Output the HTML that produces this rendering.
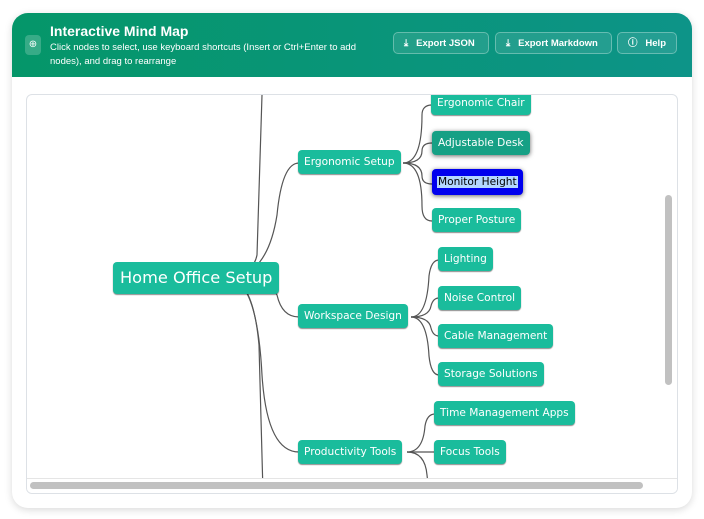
<!DOCTYPE html><html><head><style>
body{margin:0;width:704px;height:519px;background:#fff;font-family:"Liberation Sans",sans-serif;position:relative;overflow:hidden}
.card{position:absolute;left:12px;top:13px;width:680px;height:495px;border-radius:16px;background:#fff;box-shadow:0 2px 8px rgba(0,0,0,.15);overflow:hidden}
.hdr{position:absolute;left:0;top:0;width:680px;height:64px;background:linear-gradient(90deg,#059669,#0d9488)}
.ic{position:absolute;left:13px;top:22px;width:16px;height:20px;border-radius:4px;background:rgba(255,255,255,.2);color:#fff;font-size:10px;text-align:center;line-height:20px}
.t{position:absolute;left:38px;top:10px;color:#fff;font-weight:bold;font-size:14px}
.s{position:absolute;left:38px;top:28px;color:#fff;font-size:9.5px;line-height:14px;width:330px}
.b{position:absolute;top:19px;height:22px;border:1px solid rgba(255,255,255,.3);background:rgba(255,255,255,.1);border-radius:5px;color:#fff;font-size:9.5px;font-weight:bold;line-height:22px;box-sizing:border-box;padding-left:10px}
.map{position:absolute;left:14px;top:81px;width:650px;height:398px;border:1px solid #dde1e6;border-radius:6px;overflow:hidden;background:#fff}
.n{position:absolute;background:#1abc9c;color:#fff;border-radius:4px;font-family:"DejaVu Sans",sans-serif;font-size:10.6px;line-height:24px;padding:0 6px;box-shadow:0 1px 1px rgba(0,0,0,.45);white-space:nowrap}
</style></head><body>
<div class="card">
<div class="hdr">
<div class="ic">⊕</div>
<div class="t">Interactive Mind Map</div>
<div class="s">Click nodes to select, use keyboard shortcuts (Insert or Ctrl+Enter to add nodes), and drag to rearrange</div>
<div class="b" style="left:381px;width:96px">⤓&nbsp;&nbsp; Export JSON</div>
<div class="b" style="left:483px;width:117px">⤓&nbsp;&nbsp; Export Markdown</div>
<div class="b" style="left:605px;width:60px">ⓘ&nbsp;&nbsp; Help</div>
</div>
<div class="map">
<svg width="650" height="398" style="position:absolute;left:0;top:0" fill="none" stroke="#555" stroke-width="1.2">
<path d="M235 0 L230 160 Q226 180 200 183"/>
<path d="M200 183 Q226 183 232 250 L236 398"/>
<path d="M200 183 Q240 183 250 120 Q255 68 272 68"/>
<path d="M200 183 Q240 183 250 200 Q255 222 272 222"/>
<path d="M200 183 Q230 183 235 280 Q240 357 272 357"/>
<path d="M376 68 Q395 68 395 20 Q395 10 405 10"/>
<path d="M376 68 Q395 68 395 56 Q395 48 405 48"/>
<path d="M376 68 Q395 68 395 81 Q395 89 405 89"/>
<path d="M376 68 Q395 68 395 111 Q395 126 405 126"/>
<path d="M384 222 Q400 222 402 181 Q404 165 412 165"/>
<path d="M384 222 Q402 222 404 211 Q406 203 412 203"/>
<path d="M384 222 Q402 222 404 233 Q406 241 412 241"/>
<path d="M384 222 Q400 222 402 261 Q404 280 412 280"/>
<path d="M380 357 Q396 357 398 331 Q400 319 408 319"/>
<path d="M380 357 L408 357"/>
<path d="M380 357 Q398 357 400 380 L402 398"/>
</svg>
<div class="n" style="left:86px;top:167px;font-size:16.2px;line-height:32px;padding:0 7px">Home Office Setup</div>
<div class="n" style="left:271px;top:55px">Ergonomic Setup</div>
<div class="n" style="left:404px;top:-4px">Ergonomic Chair</div>
<div class="n" style="left:405px;top:36px;background:#16a085;box-shadow:0 1px 5px rgba(0,0,0,.6)">Adjustable Desk</div>
<div class="n" style="left:405px;top:74px;background:#0000ee;padding:0 2px;line-height:20px;border:3px solid #0000ee;box-shadow:0 1px 5px rgba(0,0,0,.6)"><span style="background:#b4d7ff;color:#000;padding:0 1px">Monitor Height</span></div>
<div class="n" style="left:405px;top:113px">Proper Posture</div>
<div class="n" style="left:271px;top:209px">Workspace Design</div>
<div class="n" style="left:411px;top:152px">Lighting</div>
<div class="n" style="left:411px;top:191px">Noise Control</div>
<div class="n" style="left:411px;top:229px">Cable Management</div>
<div class="n" style="left:411px;top:267px">Storage Solutions</div>
<div class="n" style="left:271px;top:345px">Productivity Tools</div>
<div class="n" style="left:407px;top:306px">Time Management Apps</div>
<div class="n" style="left:407px;top:345px">Focus Tools</div>
<div class="n" style="left:411px;top:383px">Digital Organization</div>
<div style="position:absolute;left:638px;top:100px;width:7px;height:190px;background:#c1c1c1;border-radius:4px"></div>
<div style="position:absolute;left:0;top:383px;width:650px;height:15px;background:#fff;border-top:1px solid #e5e5e5"></div>
<div style="position:absolute;left:3px;top:387px;width:613px;height:7px;background:#c1c1c1;border-radius:4px"></div>
</div>
</div>
</body></html>
